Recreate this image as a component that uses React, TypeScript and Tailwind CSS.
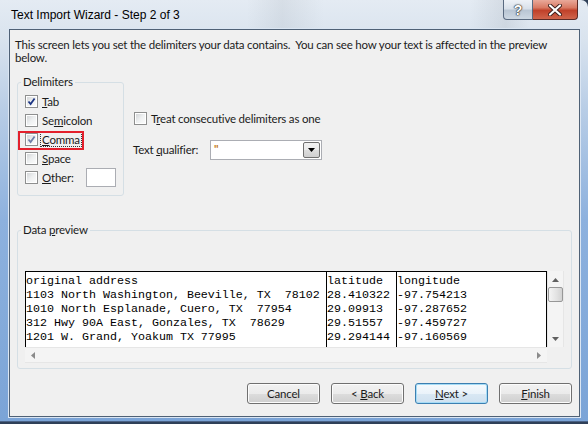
import React from "react";

const ui = "font-['Lato','Liberation_Sans',Arial,sans-serif] text-[11.5px] tracking-[-0.2px] text-[#1b1b1b]";

const Check = ({ checked, dim }: { checked?: boolean; dim?: boolean }) => (
  <div className="w-[13px] h-[13px] border border-[#8e8f8f] bg-white p-px shrink-0">
    <div className="w-full h-full bg-gradient-to-br from-[#d4d6d8] via-[#eef0f1] to-[#fbfbfb] relative">
      {checked && (
        <svg viewBox="0 0 9 9" className="absolute inset-0 w-[9px] h-[9px]">
          <path
            d="M1.5 4.5 L3.6 7 L7.6 1.4"
            fill="none"
            stroke={dim ? "#6f7fa8" : "#1d3584"}
            strokeWidth="1.8"
          />
        </svg>
      )}
    </div>
  </div>
);

const Row = ({ checked, dim, children, focus }: { checked?: boolean; dim?: boolean; children: React.ReactNode; focus?: boolean }) => (
  <div className="h-[19px] flex items-center">
    <Check checked={checked} dim={dim} />
    <span className={"ml-[3px] leading-[13px] px-px " + (focus ? "outline outline-1 outline-dotted outline-[#333]" : "")}>{children}</span>
  </div>
);

const Button = ({ children, primary }: { children: React.ReactNode; primary?: boolean }) => (
  <div
    className={
      "w-[73px] h-[21px] rounded-[3px] border flex items-center justify-center " +
      (primary
        ? "border-[#3c7fb1] shadow-[inset_0_0_0_1px_#a6dcf6] bg-[linear-gradient(#f6fafd_0%,#eaf3fa_50%,#d9e8f4_51%,#cfe1f0_100%)]"
        : "border-[#707070] shadow-[inset_0_0_0_1px_#fcfcfc] bg-[linear-gradient(#f2f2f2_0%,#ebebeb_50%,#dddddd_51%,#cfcfcf_100%)]")
    }
  >
    <span className="whitespace-pre">{children}</span>
  </div>
);

const rows = [
  ["original address", "latitude", "longitude"],
  ["1103 North Washington, Beeville, TX  78102", "28.410322", "-97.754213"],
  ["1010 North Esplanade, Cuero, TX  77954", "29.09913", "-97.287652"],
  ["312 Hwy 90A East, Gonzales, TX  78629", "29.51557", "-97.459727"],
  ["1201 W. Grand, Yoakum TX 77995", "29.294144", "-97.160569"],
];

const Col = ({ i, w, last }: { i: number; w: string; last?: boolean }) => (
  <div className={w + " border-l border-black pt-[2px] overflow-hidden " + (last ? "border-r" : "")}>
    {rows.map((r, k) => (
      <div key={k} className="h-[14px] leading-[14px] whitespace-pre">{r[i]}</div>
    ))}
  </div>
);

export default function App() {
  return (
    <div className={ui + " w-[588px] h-[424px] bg-[#2f4058] overflow-hidden"}>
      <div className="w-[588px] h-[422px] rounded-tr-[7px] bg-[linear-gradient(#e4ebf3_0px,#d9e3ee_40px,#b8cde6_110px,#8db1de_220px,#7ba4d7_100%)] flex flex-col border-b border-[#4a6286]">
        {/* title bar */}
        <div className="h-[29px] flex items-start shrink-0 bg-[linear-gradient(90deg,transparent_0%,transparent_42%,rgba(120,130,140,0.12)_48%,transparent_55%,transparent_80%,rgba(120,130,140,0.15)_86%,transparent_90%)]">
          <div className="pl-[11px] pt-[7px] font-['Liberation_Sans',Arial,sans-serif] text-[12px] tracking-normal leading-[16px] text-black">Text Import Wizard - Step 2 of 3</div>
          <div className="ml-auto mr-[10px] flex">
            <div className="w-[30px] h-[20px] rounded-bl-[4px] border border-t-0 border-[#596a80] bg-[linear-gradient(#eef2f7_0%,#d9e1ea_45%,#b9c6d4_55%,#cdd8e3_100%)] flex items-center justify-center">
              <span className="font-['Liberation_Sans',Arial,sans-serif] text-white font-bold text-[14px] leading-[14px] [text-shadow:0_0_1px_#222,0_0_1px_#222,0_0_2px_#333]">?</span>
            </div>
            <div className="w-[45px] h-[20px] rounded-br-[4px] border border-l-0 border-t-0 border-[#5b2a26] bg-[linear-gradient(#e9a99a_0%,#d97a64_40%,#c0412a_55%,#d0654c_100%)] flex items-center justify-center">
              <svg viewBox="0 0 14 12" className="w-[14px] h-[12px]">
                <path d="M2 1.5 L12 10.5 M12 1.5 L2 10.5" stroke="#3b1e1c" strokeWidth="4" strokeLinecap="round" />
                <path d="M2 1.5 L12 10.5 M12 1.5 L2 10.5" stroke="#ffffff" strokeWidth="2.2" strokeLinecap="round" />
              </svg>
            </div>
          </div>
        </div>

        {/* client area */}
        <div className="ml-[9px] mr-[8px] h-[388px] border border-[#4f6176] bg-[#f0f0f0] shadow-[0_0_0_1px_#dbe6f3] flex flex-col">
          <p className="pl-[5px] pt-[8px] leading-[13px] whitespace-pre">
            {"This screen lets you set the delimiters your data contains.  You can see how your text is affected in the preview\nbelow."}
          </p>

          <div className="flex mt-[18px]">
            {/* delimiters group */}
            <div className="ml-[7px] w-[107px] h-[114px] border border-[#d5dfe5] rounded-[3px] relative pl-[7px] pt-[9px]">
              <span className="absolute -top-[8px] left-[3px] px-[2px] bg-[#f0f0f0] leading-[14px]">Delimiters</span>
              <div className="absolute left-0 top-[48px] w-[66px] h-[19px] border-2 border-[#e3202c]" />
              <Row checked><u>T</u>ab</Row>
              <Row>Se<u>m</u>icolon</Row>
              <Row checked dim focus><u>C</u>omma</Row>
              <Row><u>S</u>pace</Row>
              <div className="h-[19px] flex items-center">
                <Check />
                <span className="ml-[4px] leading-[13px]"><u>O</u>ther:</span>
                <div className="ml-[12px] w-[30px] h-[19px] border border-[#abadb3] bg-white" />
              </div>
            </div>

            <div className="ml-[10px] pt-[30px]">
              <div className="flex items-center h-[13px]">
                <Check />
                <span className="ml-[4px]">T<u>r</u>eat consecutive delimiters as one</span>
              </div>
              <div className="flex items-center mt-[15px] -ml-px">
                <span className="w-[77px]">Text <u>q</u>ualifier:</span>
                <div className="w-[112px] h-[20px] border border-[#abadb3] bg-white flex items-stretch">
                  <span className="flex-1 pl-[3px] leading-[16px] text-[#c47a1f] font-bold">"</span>
                  <div className="w-[17px] my-px mr-px border border-[#707070] rounded-[2px] bg-[linear-gradient(#f2f2f2_0%,#ebebeb_50%,#dddddd_51%,#cfcfcf_100%)] flex items-center justify-center">
                    <svg viewBox="0 0 7 4" className="w-[7px] h-[4px]"><path d="M0 0 H7 L3.5 4 Z" fill="#000" /></svg>
                  </div>
                </div>
              </div>
            </div>
          </div>

          {/* data preview group */}
          <div className="ml-[7px] mt-[34px] w-[555px] h-[139px] border border-[#d5dfe5] rounded-[3px] relative pl-[7px] pt-[40px]">
            <span className="absolute -top-[8px] left-[3px] px-[2px] bg-[#f0f0f0] leading-[14px]">Data <u>p</u>review</span>
            <div className="w-[539px] flex flex-col">
              <div className="flex h-[76px]">
                <div className="flex h-[76px] border-t border-black bg-white font-['Liberation_Mono','Courier_New',monospace] text-[11.67px] tracking-normal text-black">
                  <Col i={0} w="w-[301px]" />
                  <Col i={1} w="w-[70px]" />
                  <Col i={2} w="w-[151px]" last />
                </div>
                <div className="w-[17px] bg-[#f4f4f4] border-x border-[#e6e6e6] flex flex-col items-center">
                  <svg viewBox="0 0 7 4" className="w-[7px] h-[4px] mt-[7px]"><path d="M0 4 H7 L3.5 0 Z" fill="#606060" /></svg>
                  <div className="mt-[5px] w-[15px] h-[15px] rounded-[2px] border border-[#979797] bg-[linear-gradient(90deg,#f4f4f4,#e2e2e2_60%,#d2d2d2)]" />
                  <svg viewBox="0 0 7 4" className="w-[7px] h-[4px] mt-auto mb-[6px]"><path d="M0 0 H7 L3.5 4 Z" fill="#606060" /></svg>
                </div>
              </div>
              <div className="flex">
                <div className="w-[522px] h-[16px] bg-[#f4f4f4] border-y border-[#e6e6e6] flex items-center justify-between px-[6px]">
                  <svg viewBox="0 0 4 7" className="w-[4px] h-[7px]"><path d="M4 0 V7 L0 3.5 Z" fill="#8a8a8a" /></svg>
                  <svg viewBox="0 0 4 7" className="w-[4px] h-[7px]"><path d="M0 0 V7 L4 3.5 Z" fill="#8a8a8a" /></svg>
                </div>
              </div>
            </div>
          </div>

          {/* buttons */}
          <div className="mt-[14px] flex justify-end gap-[11px] pr-[7px]">
            <Button>Cancel</Button>
            <Button>{"< "}<u>B</u>ack</Button>
            <Button primary><u>N</u>ext {">"}</Button>
            <Button><u>F</u>inish</Button>
          </div>
        </div>
      </div>
    </div>
  );
}
